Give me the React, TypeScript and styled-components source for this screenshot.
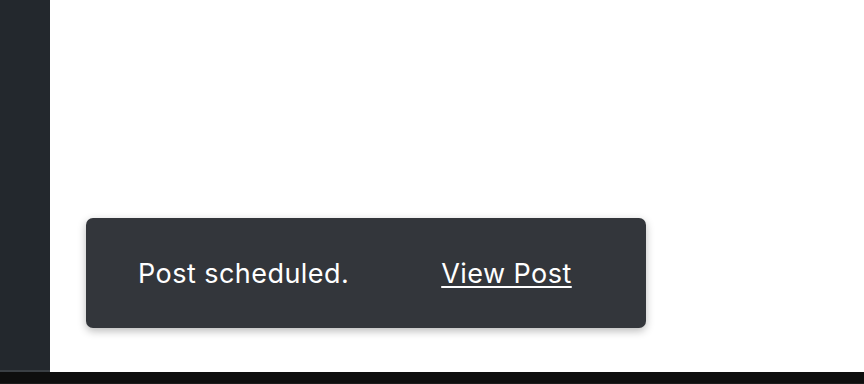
import styled, {createGlobalStyle} from "styled-components";

const GlobalStyle = createGlobalStyle`
  html, body {
    margin: 0;
    padding: 0;
    background: #ffffff;
  }
  body {
    font-family: Inter, "Noto Sans", sans-serif;
  }
`;

const Screen = styled.div`
  width: 864px;
  height: 384px;
  display: flex;
  flex-direction: column;
  overflow: hidden;
`;

const Main = styled.div`
  flex: 1;
  display: flex;
  min-height: 0;
`;

const Sidebar = styled.div`
  width: 50px;
  background: #23282d;
  border-bottom: 2px solid #3a3f44;
`;

const Content = styled.div`
  flex: 1;
  background: #ffffff;
  padding: 218px 0 0 36px;
`;

const Snackbar = styled.div`
  width: 560px;
  height: 110px;
  box-sizing: border-box;
  background: #33363b;
  border-radius: 7px;
  box-shadow: 0 3px 8px rgba(0, 0, 0, 0.28);
  display: flex;
  align-items: center;
  padding: 0 0 0 52px;
  color: #ffffff;
  font-size: 27px;
  letter-spacing: 0.45px;
`;

const Message = styled.span``;

const Action = styled.a`
  margin-left: 92px;
  color: #ffffff;
  text-decoration: underline;
  text-underline-offset: 3px;
  text-decoration-thickness: 2px;
  cursor: pointer;
`;

const BottomBar = styled.div`
  height: 12px;
  background: #0e0e0e;
  border-bottom: 1px solid #1c1c1c;
  box-sizing: border-box;
`;

const App = () => {
  return (
    <>
      <GlobalStyle />
      <Screen>
        <Main>
          <Sidebar />
          <Content>
            <Snackbar>
              <Message>Post scheduled.</Message>
              <Action>View Post</Action>
            </Snackbar>
          </Content>
        </Main>
        <BottomBar />
      </Screen>
    </>
  );
};

export default App;
